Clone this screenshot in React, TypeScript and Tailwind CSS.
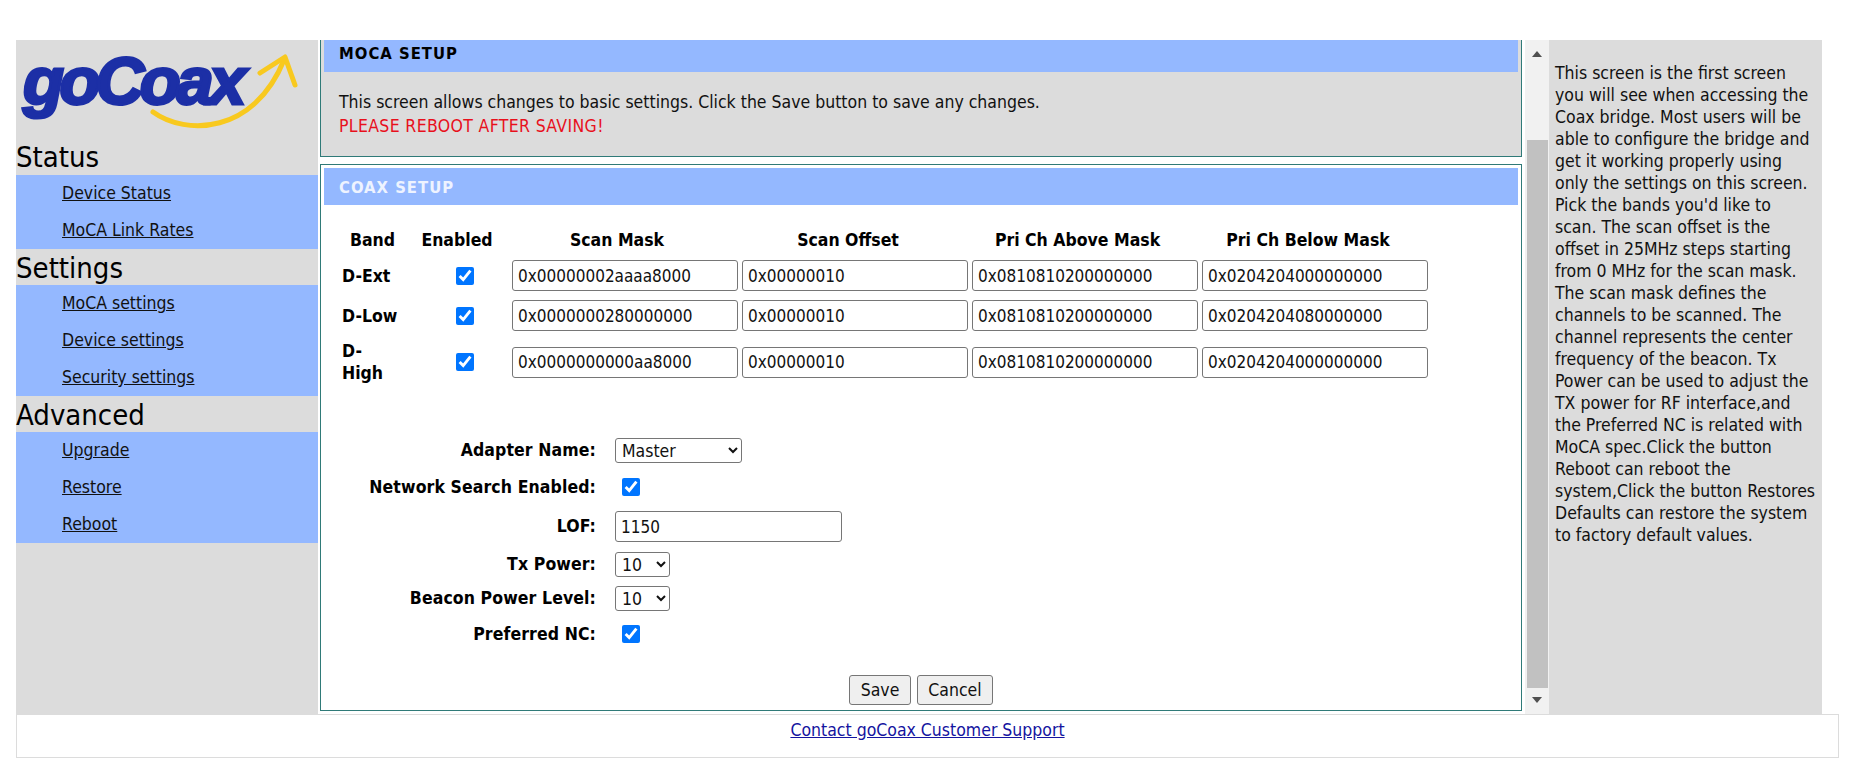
import React from 'react'

const helpLines = [
  'This screen is the first screen',
  'you will see when accessing the',
  'Coax bridge. Most users will be',
  'able to configure the bridge and',
  'get it working properly using',
  'only the settings on this screen.',
  "Pick the bands you'd like to",
  'scan. The scan offset is the',
  'offset in 25MHz steps starting',
  'from 0 MHz for the scan mask.',
  'The scan mask defines the',
  'channels to be scanned. The',
  'channel represents the center',
  'frequency of the beacon. Tx',
  'Power can be used to adjust the',
  'TX power for RF interface,and',
  'the Preferred NC is related with',
  'MoCA spec.Click the button',
  'Reboot can reboot the',
  'system,Click the button Restores',
  'Defaults can restore the system',
  'to factory default values.',
]

const bands = [
  { name: ['D-Ext'], mask: '0x00000002aaaa8000', above: '0x0810810200000000', below: '0x0204204000000000' },
  { name: ['D-Low'], mask: '0x0000000280000000', above: '0x0810810200000000', below: '0x0204204080000000' },
  { name: ['D-', 'High'], mask: '0x0000000000aa8000', above: '0x0810810200000000', below: '0x0204204000000000' },
]

const navGroups = [
  { title: 'Status', heading: 'h-[34px] leading-[33px]', links: ['Device Status', 'MoCA Link Rates'] },
  { title: 'Settings', heading: 'h-[36px] leading-[38px]', links: ['MoCA settings', 'Device settings', 'Security settings'] },
  { title: 'Advanced', heading: 'h-[36px] leading-[38px]', links: ['Upgrade', 'Restore', 'Reboot'] },
]

const Logo: React.FC = () => (
  <div className="relative h-[101px] pl-[7px]">
    <span className="block font-['Liberation_Sans'] text-[67px] leading-[82px] font-bold tracking-[-4.5px] italic text-[#1c2fa6] [-webkit-text-stroke:3px_#1c2fa6]">
      goCoax
    </span>
    <svg className="absolute top-0 left-0" width="302" height="101" viewBox="0 0 302 101" fill="none">
      <path d="M137 72 C170 96 238 94 268 20" stroke="#f8c91f" strokeWidth="5" strokeLinecap="round" />
      <path d="M244 33 L269 17 L279 45" stroke="#f8c91f" strokeWidth="5" strokeLinecap="round" strokeLinejoin="round" />
    </svg>
  </div>
)

const Sidebar: React.FC = () => (
  <aside className="w-[302px] shrink-0 bg-[#dcdcdc]">
    <Logo />
    {navGroups.map((group) => (
      <div key={group.title}>
        <div className={`${group.heading} text-[29px] text-black`}>{group.title}</div>
        <ul className="bg-[#94b8ff]">
          {group.links.map((link) => (
            <li key={link} className="h-[37px] pl-[46px] leading-[37px]">
              <a href="#" className="text-[#111] underline">
                {link}
              </a>
            </li>
          ))}
        </ul>
      </div>
    ))}
  </aside>
)

const TextInput: React.FC<{ value: string; className?: string }> = ({ value, className = '' }) => (
  <input
    readOnly
    value={value}
    className={`rounded-[3px] border border-[#767676] bg-white px-[5px] text-[17px] text-[#111] ${className}`}
  />
)

const CheckBox: React.FC = () => <input type="checkbox" readOnly checked className="size-[18px] accent-[#0075ff]" />

const Select: React.FC<{ value: string; width: string; options: string[] }> = ({ value, width, options }) => (
  <select
    value={value}
    onChange={() => {}}
    className={`h-[25px] ${width} rounded-[3px] border border-[#767676] bg-white pl-[2px] text-[#111]`}
  >
    {options.map((o) => (
      <option key={o}>{o}</option>
    ))}
  </select>
)

const FormRow: React.FC<{ label: string; className: string; children: React.ReactNode }> = ({
  label,
  className,
  children,
}) => (
  <div className={`flex items-center ${className}`}>
    <label className="w-[291px] pr-[19px] text-right font-bold tracking-[0.1px] text-black whitespace-nowrap">{label}</label>
    {children}
  </div>
)

const BandTable: React.FC = () => (
  <div className="mt-[22px] ml-[18px] grid grid-cols-[74px_88px_226px_226px_226px_226px] items-center gap-x-1 gap-y-[9px] font-bold text-black">
    <div className="h-[24px] pr-[13px] text-center leading-[26px]">Band</div>
    <div className="h-[24px] pr-[14px] text-center leading-[26px]">Enabled</div>
    <div className="h-[24px] pr-[16px] text-center leading-[26px]">Scan Mask</div>
    <div className="h-[24px] pr-[14px] text-center leading-[26px]">Scan Offset</div>
    <div className="h-[24px] pr-[15px] text-center leading-[26px]">Pri Ch Above Mask</div>
    <div className="h-[24px] pr-[14px] text-center leading-[26px]">Pri Ch Below Mask</div>
    {bands.map((band) => (
      <React.Fragment key={band.mask}>
        <div className="leading-[22px]">
          {band.name.map((part) => (
            <div key={part}>{part}</div>
          ))}
        </div>
        <div className="flex justify-center pl-[2px]">
          <CheckBox />
        </div>
        <TextInput value={band.mask} className="h-[31px] w-[226px] font-normal" />
        <TextInput value="0x00000010" className="h-[31px] w-[226px] font-normal" />
        <TextInput value={band.above} className="h-[31px] w-[226px] font-normal" />
        <TextInput value={band.below} className="h-[31px] w-[226px] font-normal" />
      </React.Fragment>
    ))}
  </div>
)

const SetupForm: React.FC = () => (
  <div>
    <FormRow label="Adapter Name:" className="mt-[54px] h-[25px]">
      <Select value="Master" width="w-[127px]" options={['Master', 'Slave']} />
    </FormRow>
    <FormRow label="Network Search Enabled:" className="mt-[14px] h-[20px]">
      <span className="ml-[7px] flex">
        <CheckBox />
      </span>
    </FormRow>
    <FormRow label="LOF:" className="mt-[14px] h-[31px]">
      <TextInput value="1150" className="h-[31px] w-[227px]" />
    </FormRow>
    <FormRow label="Tx Power:" className="mt-[10px] h-[25px]">
      <Select value="10" width="w-[55px]" options={['10']} />
    </FormRow>
    <FormRow label="Beacon Power Level:" className="mt-[9px] h-[25px]">
      <Select value="10" width="w-[55px]" options={['10']} />
    </FormRow>
    <FormRow label="Preferred NC:" className="mt-[13px] h-[20px]">
      <span className="ml-[7px] flex">
        <CheckBox />
      </span>
    </FormRow>
    <div className="mt-[31px] ml-[525px] flex gap-[6px]">
      <button className="h-[30px] w-[62px] rounded-[3px] border border-[#767676] bg-[#efefef] text-[#111]">Save</button>
      <button className="h-[30px] w-[76px] rounded-[3px] border border-[#767676] bg-[#efefef] text-[#111]">Cancel</button>
    </div>
  </div>
)

const Scrollbar: React.FC = () => (
  <div className="flex w-[24px] shrink-0 flex-col items-center bg-[#f1f1f1]">
    <div className="flex h-[100px] items-start pt-[10px]">
      <svg width="12" height="8" viewBox="0 0 12 8">
        <path d="M6 1 L11 7 L1 7 Z" fill="#505050" />
      </svg>
    </div>
    <div className="h-[548px] w-[21px] bg-[#c1c1c1]" />
    <div className="pt-[8px]">
      <svg width="12" height="8" viewBox="0 0 12 8">
        <path d="M1 1 L11 1 L6 7 Z" fill="#505050" />
      </svg>
    </div>
  </div>
)

const App: React.FC = () => {
  return (
    <div className="bg-white pt-[40px] pb-[20px] pl-4 font-['DejaVu_Sans_Condensed','DejaVu_Sans',sans-serif] text-[17.5px]">
      <div className="flex h-[674px]">
        <Sidebar />
        <main className="flex w-[1231px] shrink-0 bg-white pl-[2px]">
          <div className="w-[1202px] shrink-0">
            <section className="h-[117px] border-x border-b border-[#2f7a78] bg-[#dcdcdc] px-[3px]">
              <h2 className="h-[32px] bg-[#94b8ff] pt-[2px] pl-[15px] text-[16.5px] leading-[24px] font-bold tracking-[1px] text-black">
                MOCA SETUP
              </h2>
              <p className="mt-[18px] pl-[15px] leading-[24px] text-[#111]">
                This screen allows changes to basic settings. Click the Save button to save any changes.
              </p>
              <p className="pl-[15px] leading-[24px] tracking-[0.35px] text-[#e8101c]">PLEASE REBOOT AFTER SAVING!</p>
            </section>
            <section className="mt-[7px] h-[547px] border border-[#2f7a78] bg-white px-[3px] pt-[3px]">
              <h2 className="h-[37px] bg-[#94b8ff] pl-[15px] text-[16.5px] leading-[39px] font-bold tracking-[1px] text-[#eef3ff]">
                COAX SETUP
              </h2>
              <BandTable />
              <SetupForm />
            </section>
          </div>
          <div className="w-[3px] shrink-0" />
          <Scrollbar />
        </main>
        <aside className="w-[273px] shrink-0 bg-[#dcdcdc] pt-[22px] pl-[6px] leading-[22px] text-[#111]">
          {helpLines.map((line) => (
            <div key={line} className="whitespace-nowrap">
              {line}
            </div>
          ))}
        </aside>
      </div>
      <footer className="h-[44px] w-[1823px] border border-[#dcdcdc] text-center leading-[31px]">
        <a href="#" className="text-[#1414a0] underline">
          Contact goCoax Customer Support
        </a>
      </footer>
    </div>
  )
}

export default App
